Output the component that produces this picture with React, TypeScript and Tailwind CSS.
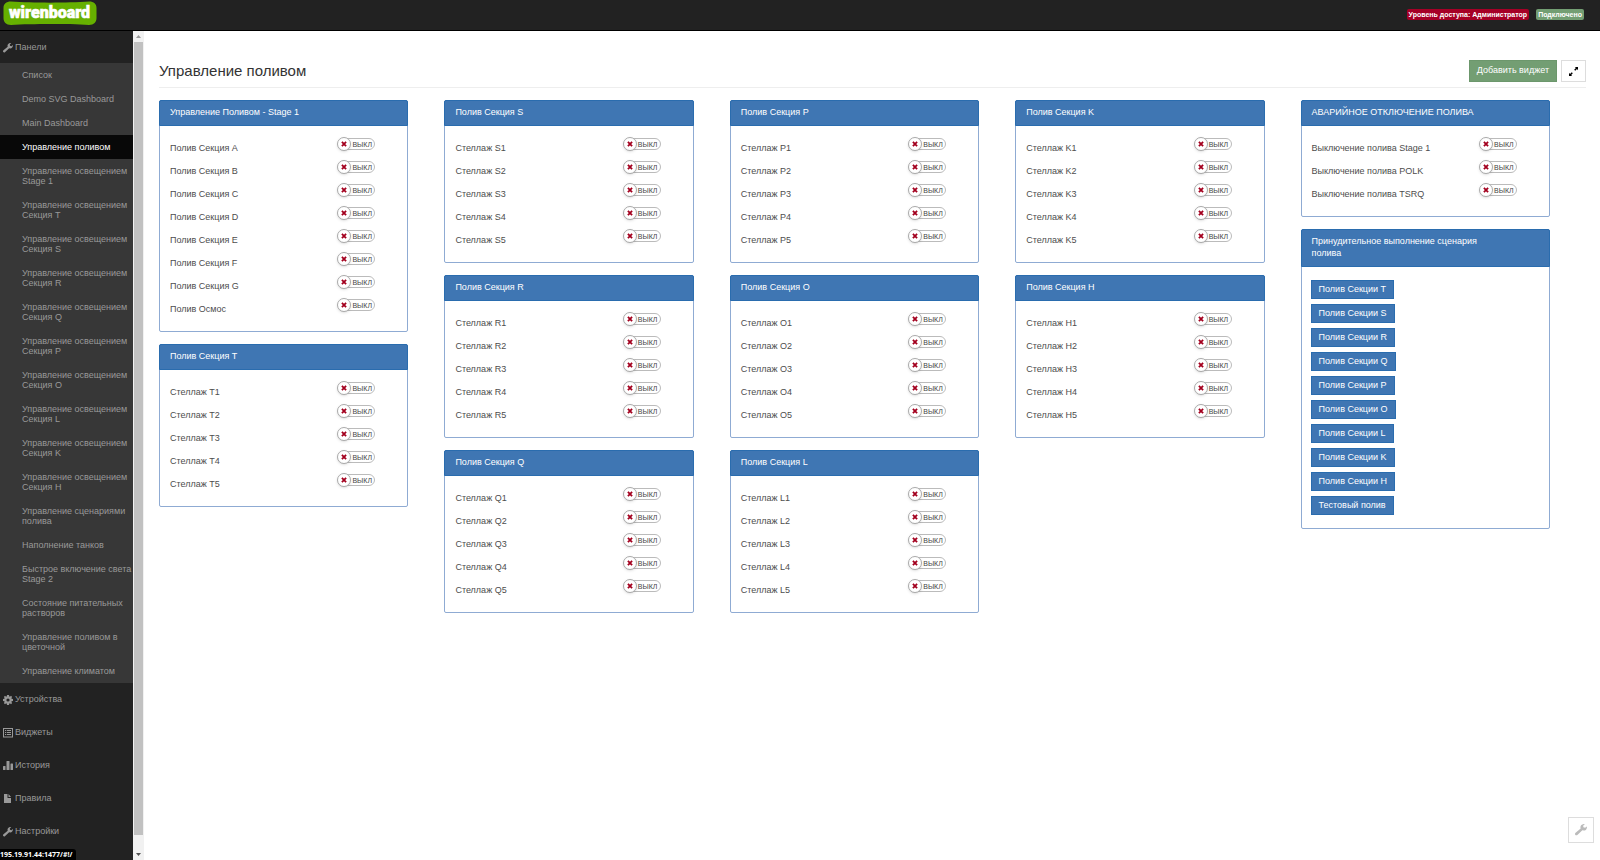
import React, { useState } from 'react';

const FONT = "font-['Liberation_Sans',Arial,sans-serif]";

type PanelData = {
  title: string;
  rows: string[];
};

const rack = (letter: string): PanelData => ({
  title: `Полив Секция ${letter}`,
  rows: [1, 2, 3, 4, 5].map(n => `Стеллаж ${letter}${n}`),
});

const columns: PanelData[][] = [
  [
    {
      title: 'Управление Поливом - Stage 1',
      rows: [...['A', 'B', 'C', 'D', 'E', 'F', 'G'].map(l => `Полив Секция ${l}`), 'Полив Осмос'],
    },
    rack('T'),
  ],
  [rack('S'), rack('R'), rack('Q')],
  [rack('P'), rack('O'), rack('L')],
  [rack('K'), rack('H')],
];

const emergency: PanelData = {
  title: 'АВАРИЙНОЕ ОТКЛЮЧЕНИЕ ПОЛИВА',
  rows: ['Выключение полива Stage 1', 'Выключение полива POLK', 'Выключение полива TSRQ'],
};

const scenarios = [
  ...['T', 'S', 'R', 'Q', 'P', 'O', 'L', 'K', 'H'].map(l => `Полив Секции ${l}`),
  'Тестовый полив',
];

const dashboards = [
  'Список',
  'Demo SVG Dashboard',
  'Main Dashboard',
  'Управление поливом',
  'Управление освещением Stage 1',
  ...['T', 'S', 'R', 'Q', 'P', 'O', 'L', 'K', 'H'].map(l => `Управление освещением Секция ${l}`),
  'Управление сценариями полива',
  'Наполнение танков',
  'Быстрое включение света Stage 2',
  'Состояние питательных растворов',
  'Управление поливом в цветочной',
  'Управление климатом',
];

const Wrench = ({ className = 'size-[10px]' }: { className?: string }) => (
  <svg viewBox="0 0 20 20" className={className} fill="currentColor" aria-hidden="true">
    <path d="M16.500 0C13 -.6 9 1.800 9 5.400L9.400 7.300 1 14.500C-.4 15.700-.4 17.200.6 18.200 1.600 19.200 3.200 19.100 4.400 17.800L12.300 10.600 14.500 11C18 11 20.500 7.600 19.800 4L16.800 6.400 14 5.600 13.600 2.800Z" />
  </svg>
);

const Cog = () => (
  <svg viewBox="0 0 20 20" className="size-[10px]" fill="currentColor" aria-hidden="true">
    <path
      fillRule="evenodd"
      d="M8 0h4l.4 2.700 1.400.6L16 1.700 18.300 4l-1.600 2.200.6 1.400L20 8v4l-2.700.4-.6 1.400 1.600 2.200-2.300 2.300-2.200-1.600-1.400.6L12 20H8l-.4-2.700-1.400-.6L4 18.300 1.700 16l1.600-2.200-.6-1.400L0 12V8l2.700-.4.6-1.400L1.700 4 4 1.700l2.200 1.600 1.400-.6ZM10 6.800a3.200 3.200 0 1 0 0 6.400 3.200 3.200 0 0 0 0-6.400Z"
    />
  </svg>
);

const ListAlt = () => (
  <svg viewBox="0 0 20 20" className="size-[10px]" aria-hidden="true">
    <rect x="1" y="1" width="18" height="17" fill="none" stroke="currentColor" strokeWidth="2" />
    <path d="M4 5h2.500M4 9h2.500M4 13h2.500M8 5h8M8 9h8M8 13h8" stroke="currentColor" strokeWidth="2" />
  </svg>
);

const Stats = () => (
  <svg viewBox="0 0 20 20" className="size-[10px]" fill="currentColor" aria-hidden="true">
    <rect x="0" y="10" width="5" height="8" rx="1" />
    <rect x="7" y="0" width="6" height="18" rx="1" />
    <rect x="15" y="5" width="5" height="13" rx="1" />
  </svg>
);

const FileIcon = () => (
  <svg viewBox="0 0 20 20" className="size-[10px]" fill="currentColor" aria-hidden="true">
    <path d="M2 0h7v8h7v10H2ZM11 0 16 6h-5Z" />
  </svg>
);

const ResizeFull = () => (
  <svg viewBox="0 0 20 20" className="size-[9px]" aria-hidden="true">
    <path d="M13 0h7v7l-2.300-2.300-3.800 3.800-2.400-2.400 3.800-3.800ZM7 20H0v-7l2.300 2.300 3.800-3.800 2.400 2.400-3.800 3.800Z" fill="currentColor" />
  </svg>
);

const Logo = () => (
  <svg viewBox="0 0 94 25" className="h-[25px] w-[94px]" role="img" aria-label="wirenboard">
    <path d="M8 1.500C30 3 64 3 86 1.500C91 1.500 93.500 4 93.500 8V18C93.500 22 91 25 86 25C64 23.800 30 23.800 8 25C3 25 .5 22 .5 18V8C.5 4 3 1.500 8 1.500Z" fill="#66b000" />
    <text x="6" y="18" fill="#fff" stroke="#fff" strokeWidth="0.600" fontSize="16" fontWeight="900" fontFamily="Roboto, sans-serif">wirenboard</text>
  </svg>
);

const sections = [
  { label: 'Устройства', icon: <Cog /> },
  { label: 'Виджеты', icon: <ListAlt /> },
  { label: 'История', icon: <Stats /> },
  { label: 'Правила', icon: <FileIcon /> },
  { label: 'Настройки', icon: <Wrench /> },
];

const Switch = ({ label }: { label: string }) => {
  const [on, setOn] = useState(false);

  return (
    <button
      role="switch"
      aria-checked={on}
      aria-label={label}
      onClick={() => setOn(!on)}
      className="flex h-[14px] items-center"
    >
      <span className="z-10 flex size-[14px] items-center justify-center rounded-full border border-[#aaa] bg-white shadow-sm">
        <svg viewBox="0 0 10 10" className="size-[6px]" aria-hidden="true">
          <path d="M1.500 1.500l7 7M8.500 1.500l-7 7" stroke={on ? '#2a7a2a' : '#a3001e'} strokeWidth="3" />
        </svg>
      </span>
      <span className="-ml-2 flex h-3 w-8 items-center rounded-full border border-[#bbb] bg-white pl-2 text-[7px] leading-none text-[#444]">
        {on ? 'ВКЛ' : 'ВЫКЛ'}
      </span>
    </button>
  );
};

const Panel = ({ title, children }: { title: string; children: React.ReactNode }) => (
  <section className="rounded-[2px] border border-[#8fabd3] bg-white">
    <h2 className="-mx-px -mt-px rounded-t-[2px] border border-[#2a6cae] bg-[#3f76b3] pt-[5px] pr-[70px] pb-[7px] pl-[10px] text-[9px] leading-3 text-white">
      {title}
    </h2>
    {children}
  </section>
);

const SwitchPanel = ({ title, rows }: PanelData) => (
  <Panel title={title}>
    <ul className="pt-[11px] pr-2 pb-[10px] pl-[10px]">
      {rows.map(row => (
        <li key={row} className="flex h-[23px]">
          <span className="w-[73%] text-[9px] leading-[23px] text-[#4d4d4d]">{row}</span>
          <Switch label={row} />
        </li>
      ))}
    </ul>
  </Panel>
);

const App = () => {
  const [active, setActive] = useState('Управление поливом');

  return (
    <div className={`flex min-h-screen flex-col bg-white text-[9px] text-[#333] ${FONT}`}>
      <header className="flex h-[31px] items-start justify-between border-b border-black bg-[#222] pr-4 pl-[3px]">
        <a href="#/"><Logo /></a>
        <div className="flex gap-[7px] pt-[9px] text-[7px] leading-[11px] font-bold text-white">
          <span className="rounded-[2px] bg-[#a50026] px-[2px]">Уровень доступа: Администратор</span>
          <span className="rounded-[2px] bg-[#739e73] px-[2px]">Подключено</span>
        </div>
      </header>

      <div className="flex grow">
        <nav className="w-[133px] shrink-0 bg-[#222] text-[#999]">
          <a href="#/dashboards" className="flex h-8 items-center gap-[2px] pt-px pl-[3px]">
            <Wrench /> Панели
          </a>
          <ul className="bg-[#373737]">
            {dashboards.map(name => (
              <li key={name}>
                <a
                  href="#/"
                  onClick={() => setActive(name)}
                  className={`block py-[7px] pl-[22px] leading-[10px] ${name === active ? 'bg-[#080808] text-white' : ''}`}
                >
                  {name}
                </a>
              </li>
            ))}
          </ul>
          {sections.map(s => (
            <a key={s.label} href="#/" className="flex h-[33px] items-center gap-[2px] pl-[3px]">
              {s.icon} {s.label}
            </a>
          ))}
        </nav>

        <div className="flex w-[11px] shrink-0 flex-col items-center justify-between bg-[#f1f1f1]" aria-hidden="true">
          <svg viewBox="0 0 11 11" className="size-[11px]"><path d="M3 7h5L5.500 4Z" fill="#999" /></svg>
          <div className="mb-[14px] w-[9px] grow bg-[#c1c1c1]" />
          <svg viewBox="0 0 11 11" className="size-[11px]"><path d="M3 4h5L5.500 7Z" fill="#505050" /></svg>
        </div>

        <main className="grow pt-[29px] pr-[14px] pl-[15px]">
          <div className="flex h-7 items-start justify-between border-b border-[#eee]">
            <h1 className="text-[15px] leading-[22px]">Управление поливом</h1>
            <div className="flex gap-1">
              <button className="h-[22px] border border-[#6c976c] bg-[#739e73] px-[7px] text-white">Добавить виджет</button>
              <button aria-label="Во весь экран" className="flex h-[22px] w-[25px] items-center justify-center border border-[#ddd] text-black">
                <ResizeFull />
              </button>
            </div>
          </div>

          <div className="grid grid-cols-5 pt-3">
            {columns.map((panels, i) => (
              <div key={i} className="flex flex-col gap-3 pr-9">
                {panels.map(p => <SwitchPanel key={p.title} {...p} />)}
              </div>
            ))}
            <div className="flex flex-col gap-3 pr-9">
              <SwitchPanel {...emergency} />
              <Panel title="Принудительное выполнение сценария полива">
                <div className="flex flex-col items-start gap-[5px] px-[9px] py-[13px]">
                  {scenarios.map(s => (
                    <button key={s} className="h-[19px] border border-[#2a6cae] bg-[#3f76b3] px-[7px] text-white">{s}</button>
                  ))}
                </div>
              </Panel>
            </div>
          </div>
        </main>
      </div>

      <button aria-label="Настройки" className="fixed right-[6px] bottom-[17px] flex size-[26px] items-center justify-center border border-[#ddd] bg-white text-[#bbb]">
        <Wrench className="size-3" />
      </button>
      <div className="fixed bottom-0 left-0 h-[11px] rounded-tr-[3px] bg-black pr-1 font-['Open_Sans',sans-serif] text-[7px] leading-[11px] font-bold text-white">
        195.19.91.44:1477/#!/
      </div>
    </div>
  );
};

export default App;
